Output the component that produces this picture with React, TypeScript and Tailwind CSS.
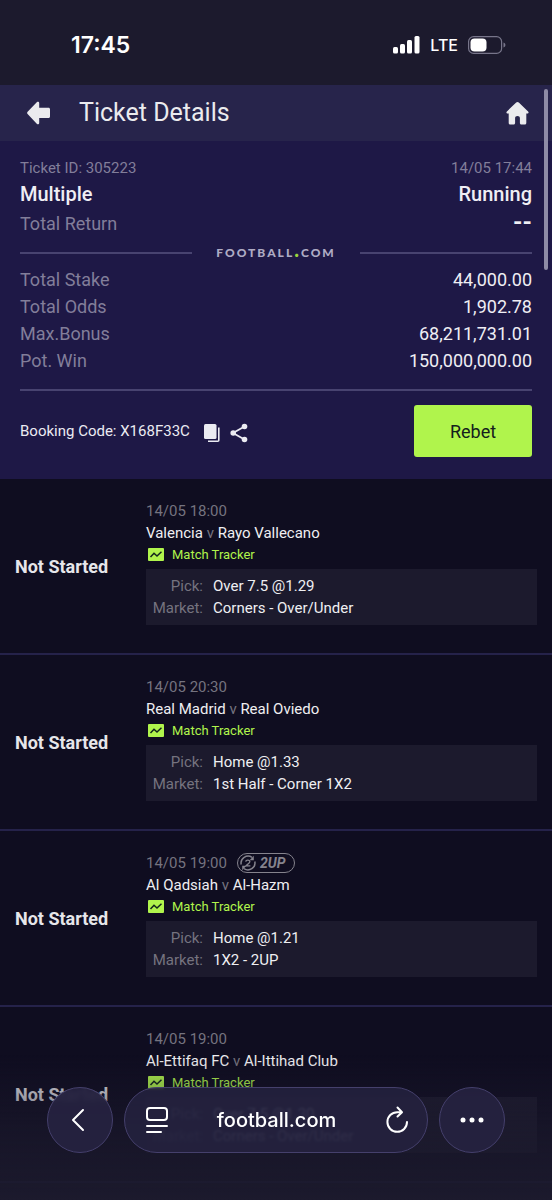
import type { ReactNode } from "react";

type Match = {
  time: string;
  home: string;
  away: string;
  pick: string;
  market: string;
  twoUp?: boolean;
};

const matches: Match[] = [
  { time: "14/05 18:00", home: "Valencia", away: "Rayo Vallecano", pick: "Over 7.5 @1.29", market: "Corners - Over/Under" },
  { time: "14/05 20:30", home: "Real Madrid", away: "Real Oviedo", pick: "Home @1.33", market: "1st Half - Corner 1X2" },
  { time: "14/05 19:00", home: "Al Qadsiah", away: "Al-Hazm", pick: "Home @1.21", market: "1X2 - 2UP", twoUp: true },
  { time: "14/05 19:00", home: "Al-Ettifaq FC", away: "Al-Ittihad Club", pick: "Over 7.5 @1.30", market: "Corners - Over/Under" },
];

const totals = [
  { label: "Total Stake", value: "44,000.00" },
  { label: "Total Odds", value: "1,902.78" },
  { label: "Max.Bonus", value: "68,211,731.01" },
  { label: "Pot. Win", value: "150,000,000.00" },
];

function StatusBar() {
  return (
    <div className="flex h-[85px] items-center justify-between bg-[#1c1a2d] pt-1 pr-[46px] pl-[71px] font-['Inter'] text-white">
      <span className="text-[23px] leading-7 font-semibold">17:45</span>
      <div className="flex items-center gap-[10px]">
        <svg width="28" height="18" viewBox="0 0 28 18" fill="currentColor">
          <rect x="1" y="11" width="5" height="6.500" rx="1.500" />
          <rect x="8" y="8" width="5" height="9.500" rx="1.500" />
          <rect x="15" y="4" width="5" height="13.500" rx="1.500" />
          <rect x="22.500" y="0" width="5" height="17.500" rx="1.500" />
        </svg>
        <span className="text-[16px] leading-6 font-medium">LTE</span>
        <svg width="38" height="18" viewBox="0 0 38 18" fill="none">
          <rect x="0.600" y="0.600" width="33" height="16.800" rx="5" stroke="#77758a" strokeWidth="1.200" />
          <rect x="2.500" y="2.500" width="16" height="13" rx="4" fill="#fff" />
          <path d="M35.500 6.500c1.400.600 1.900 1.500 1.900 2.500s-.500 1.900-1.900 2.500z" fill="#77758a" />
        </svg>
      </div>
    </div>
  );
}

function Header() {
  return (
    <header className="flex h-14 items-center bg-[#27244b] pr-[22px] pl-[27px] text-[#ebebee]">
      <button aria-label="Back">
        <svg width="24" height="24" viewBox="0 0 24 24" fill="currentColor">
          <path d="M.6 10.800 10 1.100c.8-.8 2.200-.3 2.200.9V6.800h9.300c.9 0 1.500.6 1.500 1.500v7.300c0 .9-.6 1.500-1.500 1.500h-9.300V22c0 1.200-1.400 1.700-2.200.9L.6 13.100c-.6-.6-.6-1.600 0-2.300z" />
        </svg>
      </button>
      <h1 className="ml-7 text-[25px] leading-8">Ticket Details</h1>
      <button aria-label="Home" className="ml-auto">
        <svg width="25" height="24" viewBox="0 0 25 24" fill="currentColor">
          <path d="M11.200 1.400c.8-.7 1.800-.7 2.600 0l9.300 9c.9.9.4 2.200-.8 2.200h-1v9.400c0 .9-.6 1.500-1.500 1.500h-3.400c-.9 0-1.500-.6-1.500-1.500v-5.100c0-1.200-.9-2-2.400-2s-2.400.8-2.400 2v5.100c0 .9-.6 1.500-1.500 1.500H5.200c-.9 0-1.500-.6-1.500-1.500v-9.400h-1c-1.200 0-1.700-1.300-.8-2.200z" />
        </svg>
      </button>
    </header>
  );
}

function Summary() {
  return (
    <section className="bg-[#1e1846] px-5 pt-4 pb-[22px]">
      <div className="flex justify-between text-[15px] leading-[22px] text-[#827e9a]">
        <span>Ticket ID: 305223</span>
        <span>14/05 17:44</span>
      </div>
      <div className="flex justify-between text-[20px] leading-[30px] font-medium text-[#efeef4]">
        <span>Multiple</span>
        <span>Running</span>
      </div>
      <div className="flex justify-between text-[18px] leading-[30px] text-[#827e9a]">
        <span>Total Return</span>
        <span className="text-[24px] leading-[27px] font-bold text-[#efeef4]">--</span>
      </div>
      <div className="flex items-center gap-6">
        <span className="h-[2px] flex-1 bg-[#484370]" />
        <span className="flex items-baseline font-['Lato'] text-[12px] leading-[27px] font-black tracking-[2px] text-[#aeabc4]">
          FOOTBALL<span className="text-[20px] leading-none text-[#9bd63c]">.</span>COM
        </span>
        <span className="h-[2px] flex-1 bg-[#484370]" />
      </div>
      <dl>
        {totals.map((row) => (
          <div key={row.label} className="flex justify-between text-[18px] leading-[27px]">
            <dt className="text-[#827e9a]">{row.label}</dt>
            <dd className="text-[#efeef4]">{row.value}</dd>
          </div>
        ))}
      </dl>
      <div className="mt-[15px] flex items-center border-t-2 border-[#484370] pt-[14px] text-[#ebebf2]">
        <span className="text-[15px] leading-6">Booking Code: X168F33C</span>
        <button aria-label="Copy booking code" className="mt-1 ml-[13px]">
          <svg width="18" height="20" viewBox="0 0 18 20" fill="none">
            <rect x="1" y="1" width="12.500" height="15" rx="1.500" fill="currentColor" />
            <path d="M15.800 4.500v12.800c0 .6-.4 1-1 1H5" stroke="currentColor" strokeWidth="1.600" />
          </svg>
        </button>
        <button aria-label="Share" className="mt-1 ml-[9px]">
          <svg width="18" height="20" viewBox="0 0 18 20" fill="currentColor">
            <path d="M14.500 3.500 3 10l11.500 6.500" fill="none" stroke="currentColor" strokeWidth="1.800" />
            <circle cx="14.500" cy="3.500" r="2.800" />
            <circle cx="3.200" cy="10" r="2.800" />
            <circle cx="14.500" cy="16.500" r="2.800" />
          </svg>
        </button>
        <button className="ml-auto h-[52px] w-[118px] rounded-[3px] bg-[#b0f44c] text-[18px] text-[#14201c]">Rebet</button>
      </div>
    </section>
  );
}

function TwoUpBadge() {
  return (
    <span className="flex h-5 items-center gap-1 rounded-full border border-[#85838d] pr-2 pl-[2px] text-[#85838d]">
      <svg width="16" height="16" viewBox="0 0 16 16" fill="none" stroke="currentColor">
        <path d="M1.200 9.500A7 7 0 0 1 12 2.300M14.800 6.500A7 7 0 0 1 4 13.700" strokeWidth="1.500" />
        <path d="M13.800.8v4.400H9.600zM2.200 15.200v-4.400h4.200z" fill="currentColor" stroke="none" />
        <path d="M5.700 6.600c.3-2 4.300-2 4.100.2C9.700 8.200 7.500 9 6 10.900h4.400" strokeWidth="1.400" />
      </svg>
      <span className="text-[14px] font-bold italic">2UP</span>
    </span>
  );
}

function MatchRow({ match }: { match: Match }) {
  return (
    <li className="flex h-[176px] items-center border-b-2 border-[#25224a] px-[15px]">
      <span className="w-[131px] shrink-0 text-[18px] font-bold text-[#e6e6ea]">Not Started</span>
      <div className="-mt-2 min-w-0 flex-1 text-[15px] leading-[22px] text-[#efeff2]">
        <div className="flex items-center gap-[10px] text-[#75737f]">
          <span>{match.time}</span>
          {match.twoUp && <TwoUpBadge />}
        </div>
        <p>
          {match.home} <span className="text-[#75737f]">v</span> {match.away}
        </p>
        <a href="#tracker" className="flex items-center gap-2 pl-[2px] text-[13px] text-[#b0f44c]">
          <svg width="16" height="13" viewBox="0 0 16 13">
            <rect width="16" height="13" rx="1" fill="currentColor" />
            <path d="M2.500 9 6 5.200l3 2.800L13.500 3.800" fill="none" stroke="#12251c" strokeWidth="1.500" />
          </svg>
          Match Tracker
        </a>
        <dl className="mt-[3px] grid grid-cols-[57px_1fr] gap-x-[10px] bg-[#1c1a2d] py-[6px]">
          <dt className="text-right text-[#75737f]">Pick:</dt>
          <dd>{match.pick}</dd>
          <dt className="text-right text-[#75737f]">Market:</dt>
          <dd>{match.market}</dd>
        </dl>
      </div>
    </li>
  );
}

function RoundButton({ label, children }: { label: string; children: ReactNode }) {
  return (
    <button
      aria-label={label}
      className="flex size-[66px] shrink-0 items-center justify-center rounded-full border border-[#45406c] bg-[#25223f]/95 backdrop-blur-[2px]"
    >
      {children}
    </button>
  );
}

function BrowserBar() {
  return (
    <div className="fixed inset-x-0 bottom-0 bg-linear-to-b from-[#1c1a2d]/0 via-[#1c1a2d]/60 to-[#1c1a2d] px-[47px] pt-[32px] pb-[47px] font-['Inter'] text-white">
      <div className="flex items-center gap-[11px]">
        <RoundButton label="Back">
          <svg width="18" height="24" viewBox="0 0 18 24" fill="none" stroke="currentColor" strokeWidth="2" strokeLinecap="round" strokeLinejoin="round">
            <path d="M12 2 2 12l10 10" />
          </svg>
        </RoundButton>
        <div className="flex h-[66px] min-w-0 flex-1 items-center justify-between rounded-full border border-[#45406c] bg-[#25223f]/85 px-[18px] backdrop-blur-[1px]">
          <button aria-label="Page menu" className="pl-[3px]">
            <svg width="22" height="26" viewBox="0 0 22 26" fill="none" stroke="currentColor" strokeWidth="2" strokeLinecap="round">
              <rect x="1" y="1" width="20" height="12" rx="3" />
              <path d="M1 19h20M1 25h14" />
            </svg>
          </button>
          <span className="text-[20px] leading-7 font-medium">football.com</span>
          <button aria-label="Reload">
            <svg width="24" height="28" viewBox="0 0 24 28" fill="none" stroke="currentColor" strokeWidth="2" strokeLinecap="round" strokeLinejoin="round">
              <path d="M22 16a9.800 9.800 0 1 1-9.800-9.800h4.300M12.500 1.500l4.500 4.700-4.500 4.300" />
            </svg>
          </button>
        </div>
        <RoundButton label="More">
          <svg width="24" height="6" viewBox="0 0 24 6" fill="currentColor">
            <circle cx="3" cy="3" r="2.500" />
            <circle cx="12" cy="3" r="2.500" />
            <circle cx="21" cy="3" r="2.500" />
          </svg>
        </RoundButton>
      </div>
    </div>
  );
}

export default function App() {
  return (
    <div className="relative min-h-screen bg-[#0f0d20] font-['Roboto',sans-serif]">
      <StatusBar />
      <Header />
      <Summary />
      <ul>
        {matches.map((match) => (
          <MatchRow key={match.home} match={match} />
        ))}
      </ul>
      <span className="absolute top-[89px] right-1 h-[181px] w-1 rounded-full bg-[#8e8ba6]" />
      <BrowserBar />
    </div>
  );
}
